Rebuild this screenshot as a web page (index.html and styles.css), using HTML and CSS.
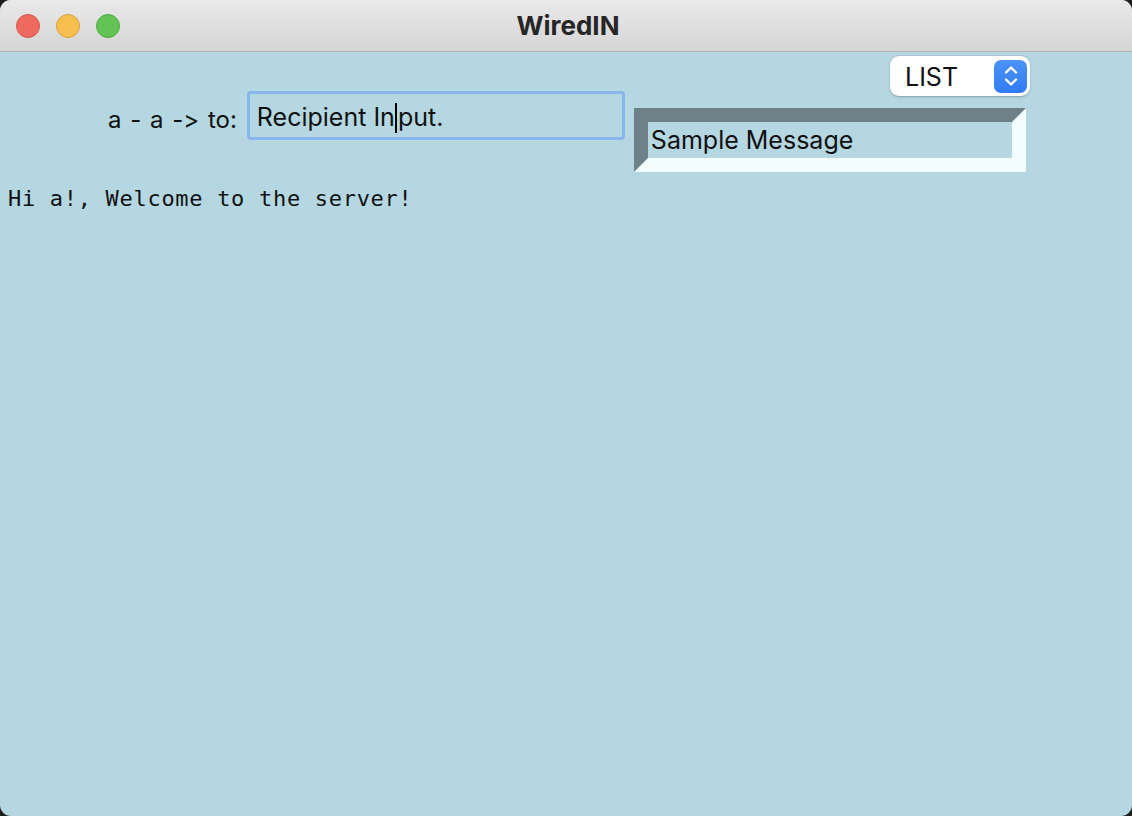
FILE: index.html
```html
<!DOCTYPE html>
<html>
<head>
<meta charset="utf-8">
<title>WiredIN</title>
<link rel="stylesheet" href="styles.css">
</head>
<body>
<div class="window">
  <div class="titlebar">
    <div class="lights">
      <span class="light red"></span>
      <span class="light yellow"></span>
      <span class="light green"></span>
    </div>
    <div class="title">WiredIN</div>
  </div>
  <div class="content">
    <div class="toprow">
      <div class="combo">
        <span class="combo-text">LIST</span>
        <span class="combo-btn">
          <svg width="20" height="26" viewBox="0 0 20 26"><path d="M5 9.5 L10 4.5 L15 9.5" fill="none" stroke="#fff" stroke-width="2.4" stroke-linecap="round" stroke-linejoin="round"/><path d="M5 16.5 L10 21.5 L15 16.5" fill="none" stroke="#fff" stroke-width="2.4" stroke-linecap="round" stroke-linejoin="round"/></svg>
        </span>
      </div>
    </div>
    <div class="formrow">
      <label class="to-label">a - a -&gt; to:</label>
      <div class="field"><span class="field-text">Recipient In<span class="caret"></span>put.</span></div>
      <div class="bevel"><span class="bevel-text">Sample Message</span></div>
    </div>
    <div class="message">Hi a!, Welcome to the server!</div>
  </div>
</div>
</body>
</html>
```
FILE: styles.css
```css
html, body {
  margin: 0;
  padding: 0;
  background: #1e1e1e;
}
.window {
  width: 1132px;
  height: 816px;
  border-radius: 11px;
  overflow: hidden;
  background: #b4d7e2;
  display: flex;
  flex-direction: column;
  font-variant-ligatures: none;
  font-feature-settings: "calt" 0, "liga" 0;
}
.titlebar {
  height: 52px;
  box-sizing: border-box;
  border-bottom: 1px solid #b2b2b2;
  background: linear-gradient(#e9e9e9, #d5d5d5);
  position: relative;
  display: flex;
  align-items: center;
  justify-content: center;
  flex: none;
}
.lights {
  position: absolute;
  left: 16px;
  top: 14px;
  display: flex;
  gap: 16px;
}
.light {
  width: 24px;
  height: 24px;
  border-radius: 50%;
  box-sizing: border-box;
}
.red { background: #ee6a5e; border: 1px solid #d4564b; }
.yellow { background: #f6be4f; border: 1px solid #d9a23e; }
.green { background: #61c454; border: 1px solid #4ea843; }
.title {
  font-family: Inter, "Liberation Sans", sans-serif;
  font-weight: 700;
  font-size: 26px;
  color: #262626;
  padding: 0 0 1px 4px;
}
.content {
  flex: 1;
  padding-top: 4px;
}
.toprow {
  display: flex;
  justify-content: flex-end;
  padding-right: 102px;
}
.combo {
  width: 140px;
  height: 40px;
  box-sizing: border-box;
  background: #fff;
  border-radius: 9px;
  box-shadow: 0 0.5px 2px rgba(0,0,0,0.25);
  display: flex;
  align-items: center;
  justify-content: space-between;
  padding: 0 3px 0 15px;
}
.combo-text {
  font-family: Inter, "Liberation Sans", sans-serif;
  font-size: 25px;
  color: #111;
  padding-top: 1px;
}
.combo-btn {
  width: 33px;
  height: 33px;
  border-radius: 7px;
  background: linear-gradient(#4b93f8, #2f7bf5);
  display: flex;
  align-items: center;
  justify-content: center;
}
.formrow {
  display: flex;
  align-items: flex-start;
  margin-top: -5px;
  padding-left: 108px;
}
.to-label {
  font-family: Inter, "Liberation Sans", sans-serif;
  font-size: 24px;
  word-spacing: 2px;
  color: #111;
  line-height: 49px;
  height: 49px;
  padding-top: 4px;
  box-sizing: border-box;
  margin-right: 10px;
  white-space: nowrap;
}
.field {
  width: 378px;
  height: 49px;
  box-sizing: border-box;
  border: 3px solid #88b6ec;
  border-radius: 4px;
  padding: 3px 7px 0;
  display: flex;
  align-items: center;
  margin-right: 9px;
}
.field-text {
  font-family: Inter, "Liberation Sans", sans-serif;
  font-size: 25px;
  color: #111;
  white-space: nowrap;
}
.caret {
  display: inline-block;
  width: 2px;
  height: 30px;
  background: #000;
  vertical-align: -7px;
  margin: 0 1px 0 0;
}
.bevel {
  margin-top: 17px;
  width: 392px;
  height: 64px;
  box-sizing: border-box;
  border-style: solid;
  border-width: 14px;
  border-color: #6d8188 #f4fdfe #f4fdfe #6d8188;
  display: flex;
  align-items: center;
  padding-left: 3px;
}
.bevel-text {
  font-family: Inter, "Liberation Sans", sans-serif;
  font-size: 25px;
  color: #111;
  white-space: nowrap;
}
.message {
  margin-top: 14px;
  padding-left: 8px;
  font-family: "DejaVu Sans Mono", monospace;
  font-size: 22px;
  letter-spacing: 0.7px;
  line-height: 26px;
  color: #111;
  white-space: pre;
}
```
